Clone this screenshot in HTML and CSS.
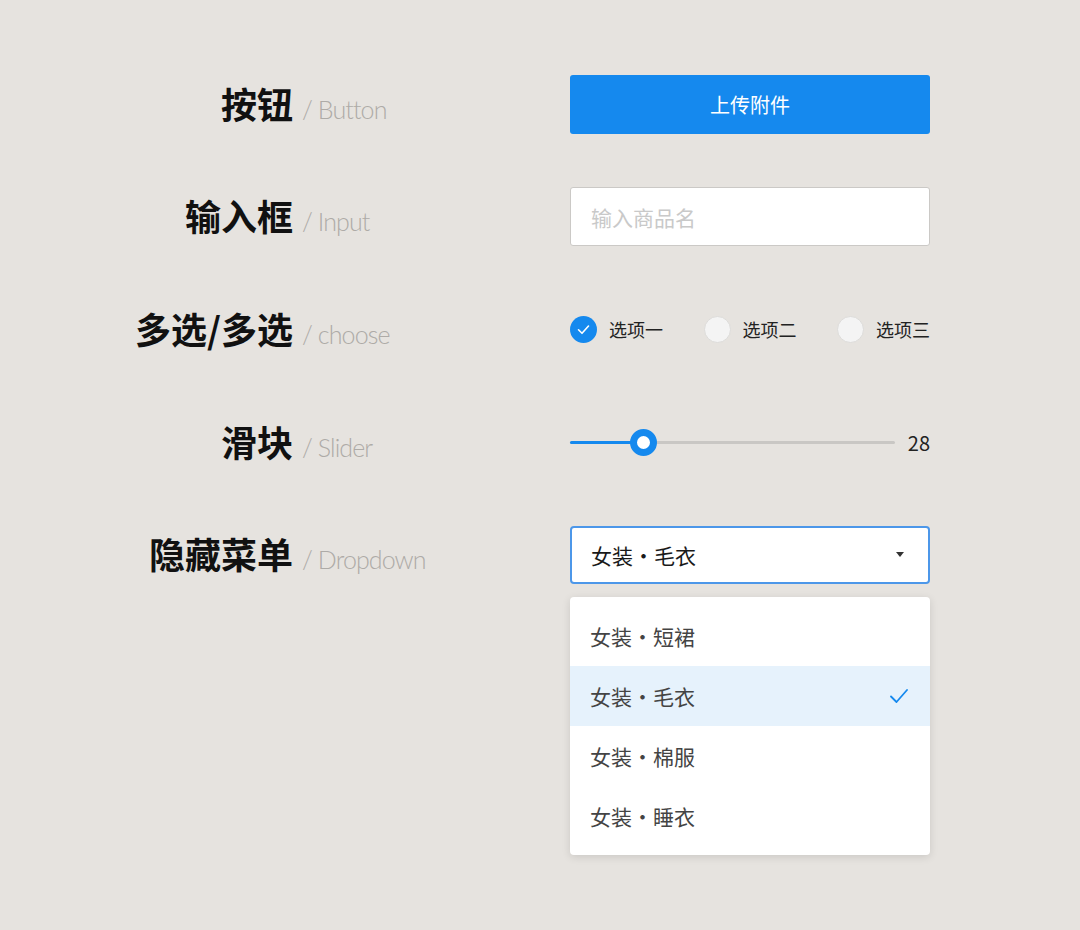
FILE: index.html
```html
<!DOCTYPE html>
<html lang="zh-CN">
<head>
  <meta charset="UTF-8">
  <title>控件 / Controls</title>
  <link rel="stylesheet" href="styles.css">
</head>
<body>
  <div class="sheet">

    <div class="row">
      <div class="label">
        <span class="label-cn">按钮</span>
        <span class="label-en">/ Button</span>
      </div>
      <div class="control">
        <button class="btn">上传附件</button>
      </div>
    </div>

    <div class="row">
      <div class="label">
        <span class="label-cn">输入框</span>
        <span class="label-en">/ Input</span>
      </div>
      <div class="control">
        <input class="text-input" type="text" placeholder="输入商品名">
      </div>
    </div>

    <div class="row">
      <div class="label">
        <span class="label-cn">多选/多选</span>
        <span class="label-en">/ choose</span>
      </div>
      <div class="control choices">
        <label class="choice">
          <span class="tick checked">
            <svg width="27" height="27" viewBox="0 0 27 27"><polyline points="8.5,13.8 12,17.3 18.5,10" fill="none" stroke="#fff" stroke-width="1.6" stroke-linecap="round" stroke-linejoin="round"/></svg>
          </span>
          选项一
        </label>
        <label class="choice">
          <span class="tick"></span>
          选项二
        </label>
        <label class="choice">
          <span class="tick"></span>
          选项三
        </label>
      </div>
    </div>

    <div class="row">
      <div class="label">
        <span class="label-cn">滑块</span>
        <span class="label-en">/ Slider</span>
      </div>
      <div class="control slider">
        <div class="track">
          <div class="track-fill"></div>
          <div class="thumb"></div>
        </div>
        <span class="slider-value">28</span>
      </div>
    </div>

    <div class="row">
      <div class="label">
        <span class="label-cn">隐藏菜单</span>
        <span class="label-en">/ Dropdown</span>
      </div>
      <div class="control dropdown">
        <div class="select">
          <span>女装・毛衣</span>
          <span class="caret"></span>
        </div>
        <ul class="menu">
          <li>女装・短裙</li>
          <li class="active">女装・毛衣
            <svg width="18" height="16" viewBox="0 0 18 16"><polyline points="1,8.5 6.5,14 17,2" fill="none" stroke="#1589ee" stroke-width="1.8" stroke-linecap="round" stroke-linejoin="round"/></svg>
          </li>
          <li>女装・棉服</li>
          <li>女装・睡衣</li>
        </ul>
      </div>
    </div>

  </div>
</body>
</html>
```

FILE: styles.css
```css
* {
  box-sizing: border-box;
}

html, body {
  height: 100%;
}

body {
  margin: 0;
  background: #e6e3df;
  font-family: "Noto Sans CJK SC", "Noto Sans", sans-serif;
  color: #222;
}

.sheet {
  padding-top: 48px;
  display: flex;
  flex-direction: column;
}

.row {
  height: 112.6px;
  display: flex;
  align-items: center;
}

.label {
  width: 570px;
  display: flex;
  align-items: baseline;
}

.label-cn {
  width: 293px;
  text-align: right;
  font-size: 36px;
  font-weight: 700;
  color: #111;
  line-height: 1;
}

.label-en {
  margin-left: 9px;
  font-family: Lato, "Open Sans", sans-serif;
  font-weight: 300;
  font-size: 25px;
  letter-spacing: -0.9px;
  color: #aeaba7;
}

.control {
  width: 360px;
  position: relative;
}

.btn {
  width: 100%;
  height: 59px;
  border: none;
  border-radius: 3px;
  background-color: #1589ee;
  color: #fff;
  font-family: inherit;
  font-size: 20px;
  cursor: pointer;
}

.text-input {
  width: 100%;
  height: 59px;
  border: 1px solid #cbc9c6;
  border-radius: 3px;
  background: #fff;
  padding: 0 20px;
  font-family: inherit;
  font-size: 21px;
  color: #222;
  outline: none;
}

.text-input::placeholder {
  color: #c9c9c9;
}

.choices {
  display: flex;
  justify-content: space-between;
  align-items: center;
}

.choice {
  display: flex;
  align-items: center;
  gap: 12px;
  font-size: 18px;
  color: #222;
}

.tick {
  width: 27px;
  height: 27px;
  border-radius: 50%;
  background: #f4f4f4;
  border: 1px solid #dddcda;
  display: flex;
}

.tick.checked {
  background: #1589ee;
  border: none;
}

.slider {
  display: flex;
  align-items: center;
  gap: 13px;
}

.track {
  flex: 1;
  height: 3px;
  border-radius: 2px;
  background: #c9c7c4;
  position: relative;
}

.track-fill {
  width: 73px;
  height: 100%;
  border-radius: 2px;
  background: #1589ee;
}

.thumb {
  position: absolute;
  left: 59.5px;
  top: -12px;
  width: 27px;
  height: 27px;
  border-radius: 50%;
  background: #fff;
  border: 7px solid #1589ee;
}

.slider-value {
  font-size: 20px;
  color: #222;
}

.select {
  height: 58px;
  background: #fff;
  border: 2px solid #4c97e9;
  border-radius: 4px;
  padding: 0 24px 0 19px;
  display: flex;
  align-items: center;
  justify-content: space-between;
  font-size: 21px;
  color: #1a1a1a;
}

.caret {
  width: 0;
  height: 0;
  border-left: 4.5px solid transparent;
  border-right: 4.5px solid transparent;
  border-top: 5px solid #333;
}

.menu {
  position: absolute;
  top: 71px;
  left: 0;
  width: 100%;
  margin: 0;
  padding: 9px 0;
  list-style: none;
  background: #fff;
  border-radius: 4px;
  box-shadow: 0 2px 8px rgba(0, 0, 0, 0.12);
}

.menu li {
  height: 60px;
  padding: 0 22px 0 20px;
  display: flex;
  align-items: center;
  justify-content: space-between;
  font-size: 21px;
  color: #444;
}

.menu li.active {
  background: #e6f2fc;
}
```
